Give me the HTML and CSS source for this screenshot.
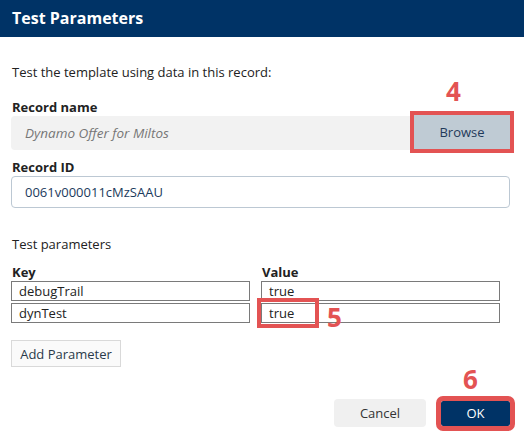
FILE: index.html
```html
<!DOCTYPE html>
<html>
<head>
<meta charset="utf-8">
<link rel="stylesheet" href="styles.css">
</head>
<body>
<div class="dialog">
  <div class="header"><h1 class="title">Test Parameters</h1></div>
  <div class="content">
    <p class="intro">Test the template using data in this record:</p>
    <div class="label">Record name</div>
    <div class="lookup">
      <div class="lookup-input">Dynamo Offer for Miltos</div>
      <div class="browse-wrap">
        <span class="marker marker-4">4</span>
        <button class="browse">Browse</button>
      </div>
    </div>
    <div class="label label-id">Record ID</div>
    <div class="id-input">0061v000011cMzSAAU</div>
    <div class="section">Test parameters</div>
    <div class="params">
      <div class="label col-label">Key</div>
      <div class="label col-label">Value</div>
      <div class="cell">debugTrail</div>
      <div class="cell">true</div>
      <div class="cell">dynTest</div>
      <div class="cell cell-mark">true<span class="ring ring-5"></span><span class="marker marker-5">5</span></div>
    </div>
    <button class="add">Add Parameter</button>
  </div>
  <div class="footer">
    <button class="cancel">Cancel</button>
    <div class="ok-wrap">
      <span class="marker marker-6">6</span>
      <button class="ok">OK</button>
    </div>
  </div>
</div>
</body>
</html>
```
FILE: styles.css
```css
* { box-sizing: border-box; }
html, body { margin: 0; padding: 0; background: #fff; }
body {
  font-family: "Open Sans", "Liberation Sans", sans-serif;
  font-size: 13px;
  color: #222;
}
.dialog { width: 524px; height: 440px; display: flex; flex-direction: column; }
.header {
  height: 37px;
  background: #003366;
  padding-left: 12px;
  display: flex;
  align-items: center;
}
.title { margin: 0; font-size: 16px; font-weight: 700; color: #fff; line-height: 20px; padding-bottom: 2px; }
.content { padding: 26px 14px 0 11px; }
.intro { margin: 0 0 17px 1px; line-height: 18px; }
.label { font-weight: 700; line-height: 18px; margin-left: 1px; }
.lookup { display: flex; height: 34px; }
.lookup-input {
  flex: 1;
  background: #f2f2f2;
  border-radius: 4px 0 0 4px;
  font-style: italic;
  font-size: 13.5px;
  color: #777;
  padding-left: 14px;
  line-height: 34px;
}
.browse-wrap { position: relative; width: 96px; margin-top: -1px; }
.browse {
  width: 96px; height: 34px;
  border: 0;
  background: #bfcbd4;
  color: #1f3a5a;
  font-family: inherit; font-size: 13px;
  outline: 4px solid #e35353;
  padding: 0;
}
.marker {
  position: absolute;
  font-size: 26px;
  font-weight: 700;
  color: #e35353;
  line-height: 26px;
}
.marker-4 { left: 32px; top: -37px; }
.label-id { margin-top: 8px; }
.id-input {
  height: 32px;
  border: 1px solid #bcc8d3;
  border-radius: 4px;
  padding-left: 13px;
  line-height: 30px;
  color: #1b3a5c;
}
.section { margin: 27px 0 10px 1px; line-height: 18px; }
.params {
  display: grid;
  grid-template-columns: 239px 239px;
  column-gap: 11px;
  row-gap: 2px;
}
.col-label { margin-bottom: -2px; }
.cell {
  height: 20px;
  border: 1px solid #7a7a7a;
  padding-left: 7px;
  line-height: 18px;
  color: #222;
}
.cell-mark { position: relative; }
.ring {
  position: absolute;
  left: -5px; top: -6px;
  width: 62px; height: 30px;
  border: 4px solid #e35353;
}
.marker-5 { left: 65px; top: 0px; }
.add {
  margin-top: 17px;
  height: 27px;
  width: 110px;
  border: 1px solid #d9d9d9;
  background: #fafafa;
  font-family: inherit; font-size: 13px;
  color: #2a3a4a;
  padding: 0;
}
.footer {
  margin-top: auto;
  display: flex;
  justify-content: flex-end;
  align-items: center;
  gap: 15px;
  padding: 0 14px 13px 0;
}
.cancel {
  width: 92px; height: 28px;
  border: 0;
  border-radius: 4px;
  background: #f0f0f0;
  color: #333;
  font-family: inherit; font-size: 13px;
}
.ok-wrap { position: relative; }
.ok {
  width: 69px; height: 25px;
  border: 0;
  border-radius: 2px;
  background: #003366;
  color: #fff;
  font-family: inherit; font-size: 13px;
  outline: 5px solid #e35353;
  display: block;
}
.marker-6 { left: 22px; top: -35px; }
```
